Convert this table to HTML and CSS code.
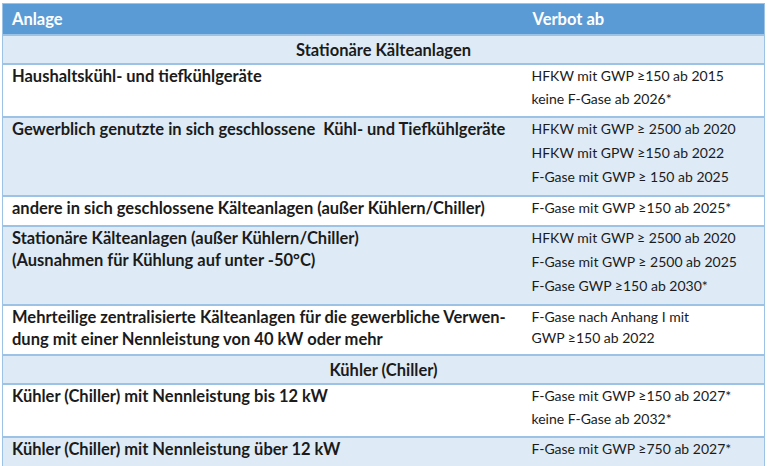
FILE: index.html
```html
<!DOCTYPE html>
<html lang="de">
<head>
<meta charset="utf-8">
<link rel="stylesheet" href="styles.css">
</head>
<body>
<table class="tbl">
  <colgroup><col class="c1"><col class="c2"></colgroup>
  <thead>
    <tr class="head"><th>Anlage</th><th>Verbot ab</th></tr>
  </thead>
  <tbody>
    <tr class="sec"><td colspan="2">Stationäre Kälteanlagen</td></tr>
    <tr class="w"><td class="l">Haushaltskühl- und tiefkühlgeräte</td><td class="r"><p>HFKW mit GWP ≥150 ab 2015</p><p>keine F-Gase ab 2026*</p></td></tr>
    <tr class="b tall"><td class="l">Gewerblich genutzte in sich geschlossene&nbsp; Kühl- und Tiefkühlgeräte</td><td class="r"><p>HFKW mit GWP ≥ 2500 ab 2020</p><p>HFKW mit GPW ≥150 ab 2022</p><p>F-Gase mit GWP ≥ 150 ab 2025</p></td></tr>
    <tr class="w"><td class="l">andere in sich geschlossene Kälteanlagen (außer Kühlern/Chiller)</td><td class="r"><p>F-Gase mit GWP ≥150 ab 2025*</p></td></tr>
    <tr class="b tall"><td class="l">Stationäre Kälteanlagen (außer Kühlern/Chiller)<br>(Ausnahmen für Kühlung auf unter -50°C)</td><td class="r"><p>HFKW mit GWP ≥ 2500 ab 2020</p><p>F-Gase mit GWP ≥ 2500 ab 2025</p><p>F-Gase GWP ≥150 ab 2030*</p></td></tr>
    <tr class="w"><td class="l">Mehrteilige zentralisierte Kälteanlagen für die gewerbliche Verwen-<br>dung mit einer Nennleistung von 40 kW oder mehr</td><td class="r"><p class="wrap">F-Gase nach Anhang I mit<br>GWP ≥150 ab 2022</p></td></tr>
    <tr class="sec"><td colspan="2">Kühler (Chiller)</td></tr>
    <tr class="w"><td class="l">Kühler (Chiller) mit Nennleistung bis 12 kW</td><td class="r"><p>F-Gase mit GWP ≥150 ab 2027*</p><p>keine F-Gase ab 2032*</p></td></tr>
    <tr class="b"><td class="l">Kühler (Chiller) mit Nennleistung über 12 kW</td><td class="r"><p>F-Gase mit GWP ≥750 ab 2027*</p></td></tr>
  </tbody>
</table>
</body>
</html>
```
FILE: styles.css
```css
html, body {
  margin: 0;
  padding: 0;
  background: #ffffff;
}
body {
  padding: 3px 0 0 2px;
  font-family: "Lato", "Open Sans", sans-serif;
  color: #1b1b1b;
}
.tbl {
  width: 762px;
  border-collapse: collapse;
  table-layout: fixed;
  border: 1px solid #9cc2e5;
}
.c1 { width: 521px; }
.c2 { width: 241px; }
.head th {
  background: #5b9bd5;
  color: #ffffff;
  font-weight: 700;
  font-size: 16.5px;
  text-align: left;
  height: 30px;
  padding: 0 9px;
  vertical-align: middle;
}
.head th + th { padding-left: 9px; }
td {
  border-top: 2px solid #9cc2e5;
  vertical-align: top;
  padding: 0 9px 4px;
}
td.r { padding-left: 8px; padding-top: 0; padding-bottom: 5px; }
.sec td {
  background: #deebf7;
  text-align: center;
  font-weight: 700;
  font-size: 16.5px;
  height: 23px;
  line-height: 22px;
  vertical-align: middle;
  padding: 2px 9px 2px;
}
.w td { background: #ffffff; }
.b td { background: #deebf7; }
.l {
  font-weight: 700;
  font-size: 16.5px;
  line-height: 22px;
}
.r {
  font-size: 14px;
}
.r p {
  margin: 0 0 1px;
  line-height: 22px;
}
.r p.wrap { line-height: 21px; }
.tall .r p { margin-bottom: 2px; }
```
